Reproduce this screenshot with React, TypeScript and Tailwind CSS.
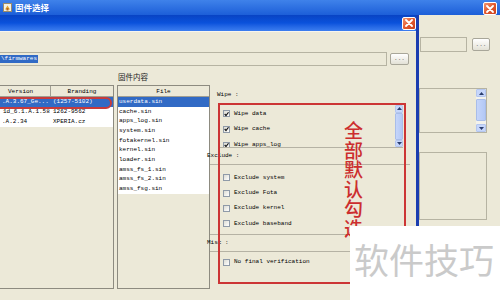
import React from 'react'

const cjk = "font-['Noto_Sans_CJK_SC',sans-serif]"

function CloseBtn() {
  return (
    <div className="flex h-[13px] w-[14px] items-center justify-center rounded-[2px] border border-white bg-gradient-to-br from-[#f0946e] via-[#e2582e] to-[#c8401c]">
      <svg width="8" height="8" viewBox="0 0 8 8">
        <path d="M1 1L7 7M7 1L1 7" stroke="white" strokeWidth="1.8" strokeLinecap="round" />
      </svg>
    </div>
  )
}

function AppIcon() {
  return (
    <svg width="9" height="9" viewBox="0 0 9 9">
      <rect x="0.5" y="0.5" width="8" height="8" fill="#f4f1e4" stroke="#9a8c6a" />
      <path d="M2 6.5L4.5 2.5L7 6.5Z" fill="#e3a52a" />
      <rect x="3.5" y="5" width="2" height="2.5" fill="#b8661c" />
    </svg>
  )
}

function Check({ on }: { on?: boolean }) {
  return (
    <div className="flex h-[7px] w-[7px] shrink-0 items-center justify-center border border-[#8f9aa8] bg-gradient-to-br from-[#dcdcd4] to-white">
      {on && (
        <svg width="6" height="6" viewBox="0 0 6 6">
          <path d="M0.8 3L2.4 4.8L5.4 0.9" fill="none" stroke="#111" strokeWidth="1.4" />
        </svg>
      )}
    </div>
  )
}

function Arrow({ up }: { up?: boolean }) {
  return (
    <div className="flex h-[8px] items-center justify-center rounded-[1px] border border-[#b4c6ee] bg-[#c6d6fb]">
      <svg width="5" height="3" viewBox="0 0 5 3">
        <path d={up ? 'M0 3L2.5 0L5 3Z' : 'M0 0L2.5 3L5 0Z'} fill="#2a3d6e" />
      </svg>
    </div>
  )
}

function ScrollBar({ w, thumbTop, thumbH }: { w: string; thumbTop: string; thumbH: string }) {
  return (
    <div className={`${w} flex h-full flex-col bg-[#f3f2ec]`}>
      <Arrow up />
      <div className="flex-1">
        <div className={`${thumbTop} ${thumbH} rounded-[1px] border border-[#a8bde9] bg-gradient-to-r from-[#c5d5fa] to-[#b3c8f5]`} />
      </div>
      <Arrow />
    </div>
  )
}

const files = [
  'userdata.sin',
  'cache.sin',
  'apps_log.sin',
  'system.sin',
  'fotakernel.sin',
  'kernel.sin',
  'loader.sin',
  'amss_fs_1.sin',
  'amss_fs_2.sin',
  'amss_fsg.sin',
]

const firmwares = [
  { v: '.A.3.67_Ge...', vx: 'pl-[3px]', b: '(1257-5102)' },
  { v: '1d_6.1.A.1.58', vx: 'pl-[4px]', b: '1262-9562' },
  { v: '.A.2.34', vx: 'pl-[3px]', b: 'XPERIA.cz' },
]

function CheckRow({ label, on }: { label: string; on?: boolean }) {
  return (
    <div className="flex h-[15.4px] items-center gap-[4px] pl-[13px]">
      <Check on={on} />
      <span>{label}</span>
    </div>
  )
}

export default function App() {
  return (
    <div className="relative h-[300px] w-[500px] overflow-hidden bg-[#ece9d8] font-['Liberation_Mono',monospace] text-[6px] leading-none text-black">
      {/* outer window title */}
      <div className="flex h-[15px] items-center bg-gradient-to-b from-[#3f82ea] to-[#1c5ed8] pl-[3px] pr-[3px]">
        <AppIcon />
        <span className={`${cjk} ml-[3px] text-[8.5px] font-bold text-white`}>固件选择</span>
        <div className="ml-auto mt-[2px]">
          <CloseBtn />
        </div>
      </div>

      <div className="flex h-[285px]">
        {/* inner dialog */}
        <div className="flex w-[419px] flex-col border-r-[3px] border-[#1b3db0]">
          <div className="flex h-[16px] items-center justify-end bg-gradient-to-b from-[#0843c4] via-[#0a52dc] to-[#3c7ef0]">
            <CloseBtn />
          </div>
          <div className="flex-1 border-t border-[#f7f5ee]">
            {/* path row */}
            <div className="mt-[20px] flex h-[14px] items-center">
              <div className="-ml-px flex h-[14px] w-[388px] items-center border border-[#b6b3a2] bg-[#ece9d8]">
                <span className="bg-[#316ac5] px-px py-[1px] text-white">\firmwares</span>
              </div>
              <div className="ml-[3px] flex h-[12px] w-[19px] items-center justify-center rounded-[2px] border border-[#a8a699] bg-gradient-to-b from-white to-[#e3e1d6] text-[#555]">
                ...
              </div>
            </div>

            <div className={`${cjk} mt-[6px] h-[10px] pl-[118px] text-[7.5px] leading-[10px] text-[#222]`}>固件内容</div>

            <div className="mt-[3px] flex h-[204px] items-start">
              {/* firmware table */}
              <div className="-ml-[2px] h-[204px] w-[116px] border border-[#8d8b80]">
                <div className="flex h-[11px] border-b border-[#a09e92] bg-[#ece9d8]">
                  <div className="w-[52px] border-r border-[#a09e92] pl-[9px] leading-[11px]">Version</div>
                  <div className="flex-1 text-center leading-[11px]">Branding</div>
                </div>
                {firmwares.map((f, i) => (
                  <div key={i} className={`flex h-[10px] items-center ${i === 0 ? 'bg-[#316ac5] text-white' : 'bg-white'}`}>
                    <div className={`w-[53px] overflow-hidden whitespace-nowrap ${f.vx}`}>{f.v}</div>
                    <div className="pl-[1px]">{f.b}</div>
                  </div>
                ))}
              </div>

              {/* file list */}
              <div className="ml-[3px] h-[204px] w-[93px] border border-[#8d8b80]">
                <div className="h-[11px] border-b border-[#a09e92] text-center leading-[11px]">File</div>
                {files.map((f, i) => (
                  <div key={f} className={`flex h-[9.7px] items-center pl-[1px] ${i === 0 ? 'bg-[#316ac5] text-white' : 'bg-white'}`}>
                    {f}
                  </div>
                ))}
              </div>

              {/* options */}
              <div className="flex w-[200px] flex-col">
                <div className="flex h-[18px] items-center pl-[7px] pt-[1px]">Wipe :</div>
                <div className="ml-[10px] mt-[2px] flex h-[43px] w-[183px] border-b border-[#b5b2a4]">
                  <div className="flex flex-1 flex-col overflow-hidden">
                    <div className="flex h-[16px] shrink-0 items-center gap-[4px] pl-[3px] pt-[1px]">
                      <Check on />
                      <span>Wipe data</span>
                    </div>
                    <div className="flex h-[16px] shrink-0 items-center gap-[4px] pl-[3px]">
                      <Check on />
                      <span>Wipe cache</span>
                    </div>
                    <div className="flex h-[16px] shrink-0 items-center gap-[4px] pl-[3px]">
                      <Check on />
                      <span>Wipe apps_log</span>
                    </div>
                  </div>
                  <ScrollBar w="w-[8px]" thumbTop="mt-0" thumbH="h-[27px]" />
                </div>
                <div className="flex h-[17px] items-center border-b border-[#b5b2a4]">
                  <span className="relative -left-[3px]">Exclude :</span>
                </div>
                <div className="pt-[5px]">
                  <CheckRow label="Exclude system" />
                  <CheckRow label="Exclude Fota" />
                  <CheckRow label="Exclude kernel" />
                  <CheckRow label="Exclude baseband" />
                </div>
                <div className="mt-[2px] flex h-[18px] items-center border-t border-b border-[#b5b2a4]">
                  <span className="relative -left-[3px]">Misc :</span>
                </div>
                <div className="pt-[3px]">
                  <CheckRow label="No final verification" />
                </div>
              </div>
            </div>
          </div>
        </div>

        {/* background window on the right */}
        <div className="flex flex-1 flex-col">
          <div className="mt-[22px] flex items-center">
            <div className="ml-px h-[15px] w-[47px] border border-[#b6b3a2]" />
            <div className="ml-[5px] flex h-[13px] w-[18px] items-center justify-center rounded-[2px] border border-[#a8a699] bg-gradient-to-b from-white to-[#e3e1d6] text-[#555]">
              ...
            </div>
          </div>
          <div className="mt-[36px] flex h-[45px] w-[68px] border border-[#b6b3a2]">
            <div className="flex-1" />
            <ScrollBar w="w-[10px]" thumbTop="mt-[2px]" thumbH="h-[22px]" />
          </div>
          <div className="mt-[19px] h-[68px] w-[68px] border border-[#b6b3a2]" />
        </div>
      </div>

      {/* red annotations */}
      <div className="absolute left-[-6px] top-[97px] h-[12px] w-[118px] rounded-full border-2 border-[#c73b3b]" />
      <div className="absolute left-[218px] top-[103px] h-[181px] w-[188px] border-2 border-[#cc3535]" />
      <div className={`${cjk} absolute left-[344px] top-[120px] flex flex-col text-[19px] font-medium leading-[19.6px] text-[#cc2e2e]`}>
        <span>全</span>
        <span>部</span>
        <span>默</span>
        <span>认</span>
        <span>勾</span>
        <span>选</span>
      </div>

      {/* watermark */}
      <div className="absolute left-[350px] top-[226px] h-[74px] w-[150px] bg-white">
        <div className={`${cjk} ml-[4px] mt-[15px] text-[35px] leading-none text-[#cacaca]`}>软件技巧</div>
      </div>
    </div>
  )
}
